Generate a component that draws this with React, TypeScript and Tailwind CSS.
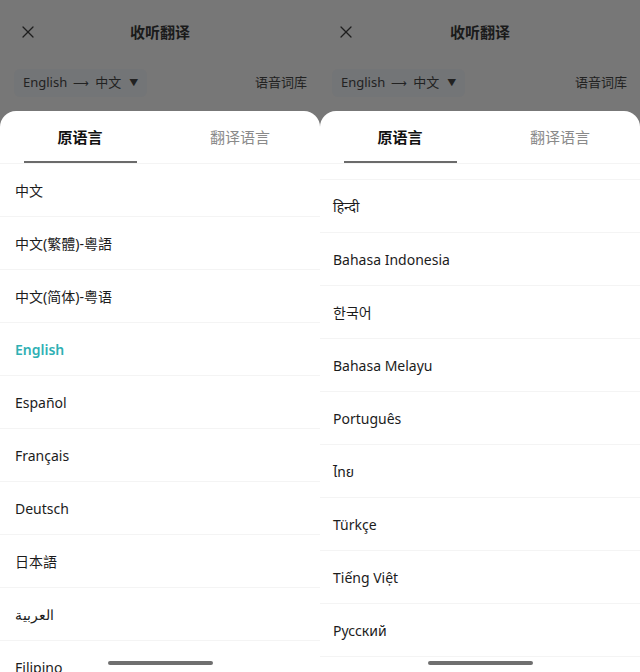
import { X } from "lucide-react";

const FONT = { fontFamily: '"Noto Sans", "Noto Sans CJK SC", "Noto Sans Devanagari", "Noto Sans Thai", sans-serif' };

interface PanelProps {
  items: string[];
  active?: string;
  scrolled?: boolean;
  left: number;
}

function Panel({ items, active, scrolled, left }: PanelProps) {
  return (
    <div className="relative flex h-full w-[320px] flex-col overflow-hidden bg-[#777777]" style={FONT}>
      {/* dimmed header behind the sheet */}
      <div className="relative flex h-16 items-center justify-center">
        <X className="absolute top-[22px] h-[20px] w-[20px] text-[#1e1e1e]" strokeWidth={1.5} style={{ left: left + 3 }} />
        <span className="text-[15px] font-bold text-[#1a1a1a]">收听翻译</span>
      </div>
      <div className="mt-[5px] flex h-[28px] items-center justify-between pr-[13px]" style={{ paddingLeft: left - 1 }}>
        <div className="flex h-full items-center gap-[6px] rounded-md bg-[#737577] px-[9px] text-[13px] text-[#222]">
          <span>English</span>
          <span className="text-[11px]">⟶</span>
          <span>中文</span>
          <span className="ml-[2px] text-[9px]">▼</span>
        </div>
        <span className="text-[13px] text-[#222]">语音词库</span>
      </div>

      {/* bottom sheet */}
      <div className="mt-[14px] flex flex-1 flex-col overflow-hidden rounded-t-[16px] bg-white">
        <div className="grid h-[53px] shrink-0 grid-cols-2 border-b border-[#f4f4f4]">
          <div className="relative flex items-center justify-center">
            <span className="text-[15px] font-bold text-[#111]">原语言</span>
            <div className="absolute bottom-0 left-[24px] h-[2px] w-[113px] bg-[#6b6b6b]" />
          </div>
          <div className="flex items-center justify-center">
            <span className="text-[15px] text-[#8a8a8a]">翻译语言</span>
          </div>
        </div>
        <div className="flex-1 overflow-hidden">
          {/* list scrolled: only the bottom edge of the previous row shows */}
          {scrolled && <div className="h-[16px] border-b border-[#f4f4f4]" />}
          {items.map((name) => (
            <div
              key={name}
              className="flex h-[53px] items-center border-b border-[#f4f4f4] text-[14px]"
              style={{ paddingLeft: left }}
            >
              <span className={name === active ? "font-semibold text-[#2fb0b4]" : "text-[#1c1c1c]"}>{name}</span>
            </div>
          ))}
        </div>
      </div>

      <div className="absolute bottom-[7px] left-[108px] h-[4px] w-[105px] rounded-full bg-[#6f6f6f]" />
    </div>
  );
}

export default function App() {
  const first = [
    "中文",
    "中文(繁體)-粵語",
    "中文(简体)-粤语",
    "English",
    "Español",
    "Français",
    "Deutsch",
    "日本語",
    "العربية",
    "Filipino",
  ];
  const second = [
    "हिन्दी",
    "Bahasa Indonesia",
    "한국어",
    "Bahasa Melayu",
    "Português",
    "ไทย",
    "Türkçe",
    "Tiếng Việt",
    "Русский",
  ];
  return (
    <div className="flex h-[672px] w-[640px]">
      <Panel items={first} active="English" left={15} />
      <Panel items={second} scrolled left={13} />
    </div>
  );
}
